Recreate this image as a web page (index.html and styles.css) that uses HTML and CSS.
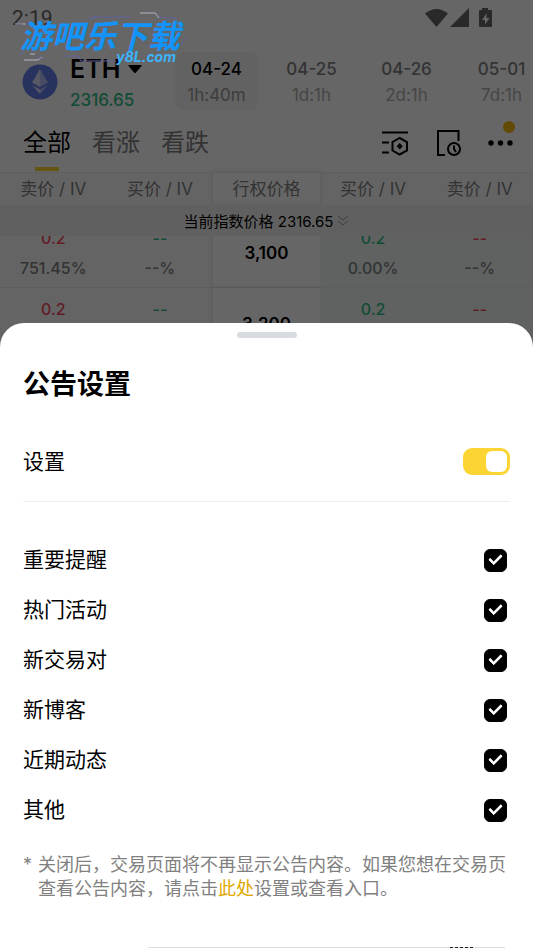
FILE: index.html
```html
<!DOCTYPE html>
<html lang="zh-CN">
<head>
<meta charset="utf-8">
<meta name="viewport" content="width=device-width, initial-scale=1">
<title>公告设置</title>
<link rel="stylesheet" href="styles.css">
</head>
<body>
<div class="screen">
  <div class="app">
    <div class="status">
      <span class="time">2:19</span>
      <svg width="68" height="20" viewBox="0 0 68 20" aria-hidden="true">
        <path d="M0 5.5Q11.500-3.500 23 5.500L11.500 19Z M25 19H44V0Z"/>
        <path d="M54 2h3V0h6v2h3q1 0 1 1v15q0 1-1 1H55q-1 0-1-1V3q0-1 1-1Z"/>
        <path class="bolt" d="M61.500 5.500L57 12h3v4.500l4.500-6.500h-3Z"/>
      </svg>
    </div>
    <header class="market">
      <svg class="coin" width="36" height="36" viewBox="0 0 36 36" aria-hidden="true">
        <circle cx="18" cy="18" r="17.500" fill="#627eea"/>
        <path d="M18 5L10 18.500L18 23Z" fill="#fff" opacity=".75"/>
        <path d="M18 5L26 18.500L18 23Z" fill="#fff" opacity=".5"/>
        <path d="M10 21L18 30V25.500Z" fill="#fff" opacity=".75"/>
        <path d="M26 21L18 30V25.500Z" fill="#fff" opacity=".5"/>
      </svg>
      <div class="pair">
        <button class="symbol" type="button">ETH
          <svg width="14" height="8" viewBox="0 0 14 8" aria-hidden="true"><path d="M1 0h12q1 0 .5 1L8 7.500q-1 1-2 0L.500 1Q0 0 1 0Z"/></svg>
        </button>
        <span class="last">2316.65</span>
      </div>
      <nav class="expiries">
        <button class="expiry on" type="button"><b>04-24</b><span>1h:40m</span></button>
        <button class="expiry" type="button"><b>04-25</b><span>1d:1h</span></button>
        <button class="expiry" type="button"><b>04-26</b><span>2d:1h</span></button>
        <button class="expiry" type="button"><b>05-01</b><span>7d:1h</span></button>
      </nav>
    </header>
    <div class="filters">
      <button class="tab on" type="button">全部</button>
      <button class="tab" type="button">看涨</button>
      <button class="tab" type="button">看跌</button>
      <div class="tools">
        <button type="button" aria-label="筛选">
          <svg width="26" height="26" viewBox="0 0 26 26" aria-hidden="true"><path d="M0 2.500H26M0 12.500H7M0 22.500H7M17.700 8L25 12v8.500L17.700 24.500L10.500 20.500V12Z"/><path class="dot" d="M17.700 13l3 3.300-3 3.300-3-3.300Z"/></svg>
        </button>
        <button type="button" aria-label="订单">
          <svg width="26" height="26" viewBox="0 0 26 26" aria-hidden="true"><path d="M10 25H3V1H23.500V11"/><circle cx="19" cy="19" r="6"/><path d="M19 15.500V19l2 3"/></svg>
        </button>
        <button class="more" type="button" aria-label="更多">
          <svg width="26" height="26" viewBox="0 0 26 26" aria-hidden="true"><g class="dot"><circle cx="3" cy="13" r="2.700"/><circle cx="12.500" cy="13" r="2.700"/><circle cx="22" cy="13" r="2.700"/></g></svg>
        </button>
      </div>
    </div>
    <div class="chain">
      <table>
        <thead>
          <tr><th>卖价 / IV</th><th>买价 / IV</th><th class="strike">行权价格</th><th>买价 / IV</th><th>卖价 / IV</th></tr>
        </thead>
        <tbody>
          <tr class="first">
            <td><b class="red">0.2</b><span>751.45%</span></td>
            <td><b class="green">--</b><span>--%</span></td>
            <td class="strike"><strong>3,100</strong></td>
            <td class="put"><b class="green">0.2</b><span>0.00%</span></td>
            <td class="put"><b class="red">--</b><span>--%</span></td>
          </tr>
          <tr>
            <td><b class="red">0.2</b></td>
            <td><b class="green">--</b></td>
            <td class="strike"><strong>3,200</strong></td>
            <td class="put"><b class="green">0.2</b></td>
            <td class="put"><b class="red">--</b></td>
          </tr>
        </tbody>
      </table>
      <div class="index">当前指数价格 2316.65
        <svg width="12" height="12" viewBox="0 0 12 12" aria-hidden="true"><path d="M1 1l5 4 5-4M1 6l5 4 5-4"/></svg>
      </div>
    </div>
  </div>

  <div class="scrim"></div>

  <div class="brand">
    <svg class="circuit" width="180" height="60" viewBox="0 0 180 60" aria-hidden="true">
      <path class="pale" d="M128 7h15l4 5M3 18h12M12 54h14l4-3M18 48h5"/>
      <path d="M79 13l3-2h36M147 10l5 2h12M50 50h16l3 5h35M8 50l6-12M85 12h-8M169 39l6-9M24 51l8 2M120 49h-6l-3 6"/>
    </svg>
    <span class="brand-name">游吧乐下载</span>
    <span class="brand-url">y8L.com</span>
  </div>

  <section class="sheet" role="dialog" aria-labelledby="sheet-title">
    <div class="handle"></div>
    <h1 id="sheet-title">公告设置</h1>
    <label class="setting">设置<input class="switch" type="checkbox" role="switch" checked></label>
    <div class="options">
      <label>重要提醒<input class="check" type="checkbox" checked></label>
      <label>热门活动<input class="check" type="checkbox" checked></label>
      <label>新交易对<input class="check" type="checkbox" checked></label>
      <label>新博客<input class="check" type="checkbox" checked></label>
      <label>近期动态<input class="check" type="checkbox" checked></label>
      <label>其他<input class="check" type="checkbox" checked></label>
    </div>
    <p class="note"><span>*</span><span>关闭后，交易页面将不再显示公告内容。如果您想在交易页查看公告内容，请点击<a href="#entry">此处</a>设置或查看入口。</span></p>
    <div class="edge"></div>
  </section>
</div>
</body>
</html>
```
FILE: styles.css
```css
* { box-sizing: border-box; }

body {
  margin: 0;
  font-family: Inter, "Noto Sans CJK SC", sans-serif;
  color: #000;
  background: #fff;
}

button {
  padding: 0;
  border: 0;
  background: none;
  color: inherit;
  font: inherit;
}

svg { display: block; }

.screen {
  position: relative;
  min-height: 100vh;
  overflow: hidden;
}

/* Status bar */
.status {
  display: flex;
  justify-content: space-between;
  align-items: center;
  height: 36px;
  padding: 0 40px 0 12px;
}
.time {
  font: 21px/24px Roboto, sans-serif;
  color: #666;
}
.status svg { fill: #666; }
.status .bolt { fill: #fff; }

/* Pair and expiry dates */
.market {
  display: flex;
  align-items: flex-start;
  padding: 16px 0 0 22px;
}
.coin {
  flex: none;
  margin-top: 12px;
}
.pair {
  flex: none;
  width: 105px;
  margin-left: 12px;
}
.symbol {
  display: flex;
  align-items: center;
  gap: 8px;
  font-size: 25px;
  font-weight: 600;
  line-height: 34px;
}
.last {
  display: block;
  font-size: 17px;
  font-weight: 500;
  line-height: 28px;
  color: #2ebd85;
}
.expiries {
  display: flex;
  gap: 12px;
}
.expiry {
  display: flex;
  flex: none;
  flex-direction: column;
  align-items: center;
  width: 83px;
  padding: 4px 0 2px;
  border-radius: 8px;
  font-size: 17px;
  line-height: 26px;
  color: #b0b0b0;
}
.expiry b {
  font-weight: 500;
  color: #808080;
}
.expiry.on {
  background: #f5f5f5;
  color: #999;
}
.expiry.on b { color: #000; }

/* Filter tabs */
.filters {
  display: flex;
  align-items: stretch;
  gap: 21px;
  height: 58px;
  padding: 0 19px 0 23px;
}
.tab {
  position: relative;
  font-size: 24px;
  line-height: 36px;
  color: #808080;
}
.tab.on { color: #000; }
.tab.on::after {
  content: "";
  position: absolute;
  bottom: 1px;
  left: 12px;
  width: 24px;
  height: 4px;
  background: #fcd535;
}
.tools {
  display: flex;
  align-items: center;
  gap: 27px;
  margin-left: auto;
}
.tools svg {
  fill: none;
  stroke: #000;
  stroke-width: 2;
}
.tools .dot {
  fill: #000;
  stroke: none;
}
.more { position: relative; }
.more::after {
  content: "";
  position: absolute;
  top: -9px;
  right: -1px;
  width: 12px;
  height: 12px;
  border-radius: 50%;
  background: #f0b90b;
}

/* Option chain */
.chain { position: relative; }
table {
  width: 100%;
  table-layout: fixed;
  border-collapse: separate;
  border-spacing: 0;
  text-align: center;
  background: #fafafa;
}
th {
  height: 33px;
  padding: 0;
  border-top: 1px solid #eee;
  font-size: 17px;
  font-weight: 400;
  line-height: 24px;
  color: #808080;
}
td {
  height: 71px;
  padding: 6px 0 4px;
  border-bottom: 1px solid #eaeaea;
  font-size: 16px;
  font-weight: 500;
  line-height: 30px;
  vertical-align: top;
  color: #808080;
}
.first td { padding-top: 18px; }
td b, td span { display: block; }
td b { font-weight: 500; }
td strong {
  font-size: 17px;
  font-weight: 600;
  color: #000;
}
.strike {
  background: #fff;
  box-shadow: 0 0 6px rgba(0, 0, 0, .12);
  vertical-align: middle;
}
.put { background: #edf5f2; }
.red { color: #f6465d; }
.green { color: #2ebd85; }
.index {
  position: absolute;
  top: 33px;
  left: 0;
  display: flex;
  align-items: center;
  justify-content: center;
  gap: 4px;
  width: 100%;
  height: 31px;
  background: #f0f0f0;
  font-size: 15px;
}
.index svg {
  fill: none;
  stroke: #999;
  stroke-width: 1;
}

.scrim {
  position: absolute;
  inset: 0;
  background: rgba(0, 0, 0, .6);
}

/* Site mark */
.brand {
  position: absolute;
  top: 6px;
  left: 12px;
  width: 180px;
  height: 60px;
  font-style: italic;
  font-weight: 700;
}
.circuit {
  fill: none;
  stroke: #62629d;
  stroke-width: 1;
}
.circuit .pale { stroke: #b4b4c8; }
.brand-name {
  position: absolute;
  top: 9px;
  left: 8px;
  font-size: 32px;
  line-height: 44px;
  white-space: nowrap;
  color: #1394fc;
}
.brand-url {
  position: absolute;
  top: 42px;
  right: 16px;
  font-size: 14px;
  line-height: 18px;
  color: #3db4fa;
}

/* Bottom sheet */
.sheet {
  position: absolute;
  right: 0;
  bottom: 0;
  left: 0;
  padding: 9px 23px 0;
  border-radius: 24px 24px 0 0;
  background: #fff;
}
.handle {
  width: 60px;
  height: 6px;
  margin: 0 auto;
  border-radius: 3px;
  background: #d8dce1;
}
h1 {
  margin: 29px 0 19px;
  font-size: 27px;
  font-weight: 700;
  line-height: 36px;
}
.setting, .options label {
  display: flex;
  align-items: center;
  justify-content: space-between;
  font-size: 21px;
  line-height: 30px;
}
.setting {
  height: 80px;
  border-bottom: 1px solid #eee;
}
.options { margin-top: 33px; }
.options label {
  height: 50px;
  padding-right: 3px;
}
input {
  flex: none;
  margin: 0;
  appearance: none;
}
.switch {
  display: flex;
  justify-content: flex-end;
  width: 47px;
  height: 27px;
  padding: 3px;
  border-radius: 9px;
  background: #fcd535;
}
.switch::before {
  content: "";
  width: 21px;
  height: 21px;
  border-radius: 6px;
  background: #fff;
}
.switch:not(:checked) {
  justify-content: flex-start;
  background: #d8dce1;
}
.check {
  display: grid;
  place-items: center;
  width: 23px;
  height: 23px;
  border: 1px solid #000;
  border-radius: 6px;
}
.check:checked { background: #000; }
.check:checked::before {
  content: "";
  width: 10px;
  height: 5px;
  margin-bottom: 4px;
  border: solid #fff;
  border-width: 0 0 3px 3px;
  border-radius: 1px;
  transform: rotate(-45deg);
}
.note {
  display: flex;
  gap: 6px;
  margin: 18px 0 46px;
  font-size: 18px;
  line-height: 24px;
  color: #808080;
}
.note a {
  color: #e0a800;
  text-decoration: none;
}
.edge {
  height: 1px;
  margin: 0 5px 0 125px;
  background: repeating-linear-gradient(90deg, #222 0 3px, #ddd 3px 5px) 302px 0 / 25px 1px no-repeat #ddd;
}
```
